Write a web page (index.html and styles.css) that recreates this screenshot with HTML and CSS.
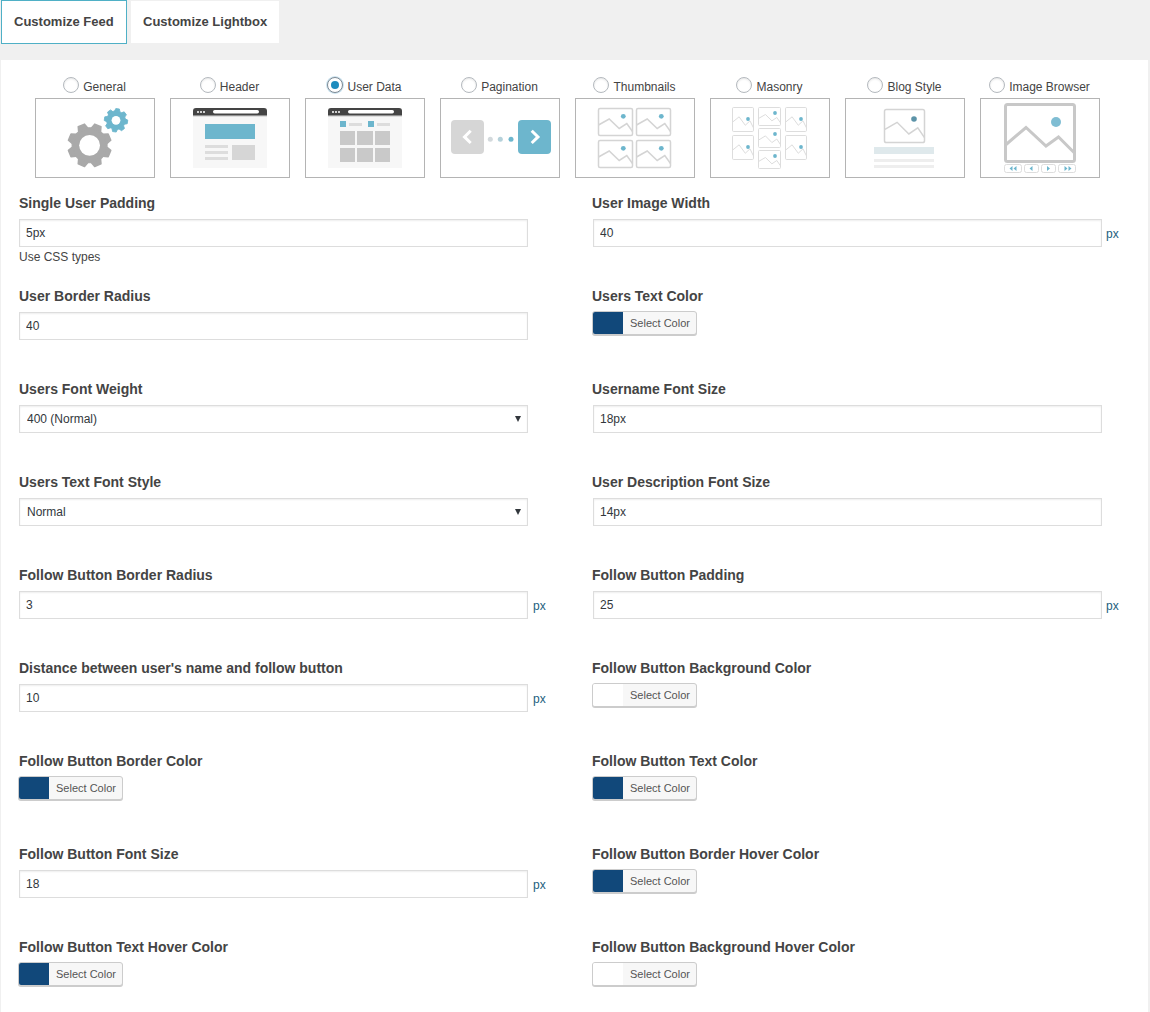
FILE: index.html
```html
<!DOCTYPE html>
<html lang="en">
<head>
<meta charset="utf-8">
<title>Customize Feed</title>
<link rel="stylesheet" href="styles.css">
</head>
<body>
<svg class="defs" aria-hidden="true">
  <symbol id="pic" viewBox="0 0 34 27" preserveAspectRatio="none" overflow="visible">
    <rect x="0" y="0" width="34" height="27" rx="1.5" fill="#fff" vector-effect="non-scaling-stroke"/>
    <polyline points="0,16.5 10.7,10.5 20.7,20 28.3,15 34,23" fill="none" vector-effect="non-scaling-stroke"/>
  </symbol>
  <symbol id="bar" viewBox="0 0 74 13" overflow="visible">
    <path d="M0 8V3a3 3 0 0 1 3-3h68a3 3 0 0 1 3 3v5z" fill="#444"/>
    <rect y="7.5" width="74" height="1.5" fill="#ddd"/>
    <circle cx="5" cy="4" r="1" fill="#fff"/><circle cx="8" cy="4" r="1" fill="#fff"/><circle cx="11" cy="4" r="1" fill="#fff"/>
    <rect x="20" y="2" width="46" height="3.5" rx="1.7" fill="#fff"/>
  </symbol>
  <symbol id="gear" viewBox="-25 -25 50 50" overflow="visible">
    <circle r="17.5"/>
    <g stroke-width="1.5" stroke-linejoin="round">
      <path d="M-5-16.5L-3.4-21.5H3.4L5-16.5z"/>
      <path d="M-5-16.5L-3.4-21.5H3.4L5-16.5z" transform="rotate(45)"/>
      <path d="M-5-16.5L-3.4-21.5H3.4L5-16.5z" transform="rotate(90)"/>
      <path d="M-5-16.5L-3.4-21.5H3.4L5-16.5z" transform="rotate(135)"/>
      <path d="M-5-16.5L-3.4-21.5H3.4L5-16.5z" transform="rotate(180)"/>
      <path d="M-5-16.5L-3.4-21.5H3.4L5-16.5z" transform="rotate(225)"/>
      <path d="M-5-16.5L-3.4-21.5H3.4L5-16.5z" transform="rotate(270)"/>
      <path d="M-5-16.5L-3.4-21.5H3.4L5-16.5z" transform="rotate(315)"/>
    </g>
  </symbol>
</svg>
<nav class="tabs">
  <a class="tab tab-active">Customize Feed</a>
  <a class="tab">Customize Lightbox</a>
</nav>
<main class="panel">
  <div class="kinds">
    <div class="kind">
      <label class="kind-label"><input type="radio" name="kind" class="radio">General</label>
      <div class="kind-box"><svg class="art" viewBox="1 1 118 78">
        <g class="gear-big" transform="translate(54.6 47.3) rotate(22.5) translate(-25 -25)"><use href="#gear" width="50" height="50"/></g>
        <circle cx="54.6" cy="47.3" r="10.4" fill="#fff"/>
        <g class="gear-small" transform="translate(81 22.3) rotate(8) scale(.54) translate(-25 -25)"><use href="#gear" width="50" height="50"/></g>
        <circle cx="81" cy="22.3" r="4.4" fill="#fff"/>
      </svg></div>
    </div>
    <div class="kind">
      <label class="kind-label"><input type="radio" name="kind" class="radio">Header</label>
      <div class="kind-box"><svg class="art" viewBox="1 1 118 78">
        <rect x="23" y="10" width="74" height="60" fill="#f7f7f7"/>
        <use href="#bar" x="23" y="10" width="74" height="13"/>
        <rect x="35" y="26" width="50" height="15" fill="#6db6cd"/>
        <rect x="35" y="47" width="23" height="3" fill="#ddd"/>
        <rect x="35" y="53" width="23" height="3" fill="#ddd"/>
        <rect x="35" y="59" width="23" height="3" fill="#ddd"/>
        <rect x="62" y="47" width="23" height="15" fill="#d6d6d6"/>
      </svg></div>
    </div>
    <div class="kind">
      <label class="kind-label"><input type="radio" name="kind" class="radio" checked>User Data</label>
      <div class="kind-box"><svg class="art" viewBox="1 1 118 78">
        <rect x="23" y="10" width="74" height="60" fill="#f7f7f7"/>
        <use href="#bar" x="23" y="10" width="74" height="13"/>
        <rect x="35" y="23" width="6" height="6" fill="#6db6cd"/>
        <rect x="44" y="25" width="13" height="3" fill="#ddd"/>
        <rect x="63" y="23" width="6" height="6" fill="#6db6cd"/>
        <rect x="72" y="25" width="13" height="3" fill="#ddd"/>
        <g fill="#c9c9c9">
          <rect x="35" y="33" width="15" height="14"/><rect x="52" y="33" width="16" height="14"/><rect x="70" y="33" width="15" height="14"/>
          <rect x="35" y="50" width="15" height="14"/><rect x="52" y="50" width="16" height="14"/><rect x="70" y="50" width="15" height="14"/>
        </g>
      </svg></div>
    </div>
    <div class="kind">
      <label class="kind-label"><input type="radio" name="kind" class="radio">Pagination</label>
      <div class="kind-box"><svg class="art" viewBox="1 1 118 78">
        <rect x="11" y="22" width="33" height="34" rx="4" fill="#d6d6d6"/>
        <polyline points="30.7,32.7 24.5,38.9 30.7,45" fill="none" stroke="#fff" stroke-width="3"/>
        <circle cx="50.3" cy="41.3" r="2.5" fill="#d3d9dc"/>
        <circle cx="60.3" cy="41.3" r="2.5" fill="#b5d1da"/>
        <circle cx="71" cy="41.3" r="2.5" fill="#6db6cd"/>
        <rect x="78" y="22" width="33" height="34" rx="4" fill="#6db6cd"/>
        <polyline points="91.7,32.7 98,38.9 91.7,45" fill="none" stroke="#fff" stroke-width="3"/>
      </svg></div>
    </div>
    <div class="kind">
      <label class="kind-label"><input type="radio" name="kind" class="radio">Thumbnails</label>
      <div class="kind-box"><svg class="art art-thumb" viewBox="1 1 118 78">
        <use href="#pic" x="23.5" y="10.5" width="34" height="27"/>
        <use href="#pic" x="61.5" y="10.5" width="34" height="27"/>
        <use href="#pic" x="23.5" y="42.5" width="34" height="27"/>
        <use href="#pic" x="61.5" y="42.5" width="34" height="27"/>
        <g fill="#6db6cd">
          <circle cx="48.3" cy="18.3" r="2.4"/><circle cx="86.3" cy="18.3" r="2.4"/>
          <circle cx="48.3" cy="50.3" r="2.4"/><circle cx="86.3" cy="50.3" r="2.4"/>
        </g>
      </svg></div>
    </div>
    <div class="kind">
      <label class="kind-label"><input type="radio" name="kind" class="radio">Masonry</label>
      <div class="kind-box"><svg class="art art-mason" viewBox="1 1 118 78">
        <use href="#pic" x="22.5" y="9.5" width="21" height="24"/>
        <use href="#pic" x="22.5" y="37.5" width="21" height="24"/>
        <use href="#pic" x="48.5" y="9.5" width="22" height="18"/>
        <use href="#pic" x="48.5" y="30.5" width="22" height="19"/>
        <use href="#pic" x="48.5" y="52.5" width="22" height="18"/>
        <use href="#pic" x="75.5" y="9.5" width="21" height="24"/>
        <use href="#pic" x="75.5" y="37.5" width="21" height="24"/>
        <g fill="#6db6cd">
          <circle cx="38" cy="21" r="1.9"/><circle cx="38" cy="49" r="1.9"/>
          <circle cx="65" cy="15" r="1.9"/><circle cx="65" cy="36" r="1.9"/><circle cx="65" cy="58" r="1.9"/>
          <circle cx="91" cy="21" r="1.9"/><circle cx="91" cy="49" r="1.9"/>
        </g>
      </svg></div>
    </div>
    <div class="kind">
      <label class="kind-label"><input type="radio" name="kind" class="radio">Blog Style</label>
      <div class="kind-box"><svg class="art art-thumb" viewBox="1 1 118 78">
        <use href="#pic" x="39.5" y="11.5" width="40" height="33"/>
        <circle cx="69" cy="21" r="2.8" fill="#5c93a8"/>
        <rect class="plain" x="29" y="49" width="60" height="7" fill="#dfe9ec"/>
        <rect class="plain" x="29" y="61" width="60" height="3" fill="#eee"/>
        <rect class="plain" x="29" y="67" width="60" height="3" fill="#eee"/>
      </svg></div>
    </div>
    <div class="kind">
      <label class="kind-label"><input type="radio" name="kind" class="radio">Image Browser</label>
      <div class="kind-box"><svg class="art" viewBox="1 1 118 78">
        <rect x="25.5" y="6.5" width="69" height="57" rx="2" fill="#fff" stroke="#c8c8c8" stroke-width="3"/>
        <polyline points="25.5,47 46,29.5 66,48 78.5,39 94.5,55" fill="none" stroke="#c8c8c8" stroke-width="3"/>
        <circle cx="76" cy="24" r="5" fill="#7fbdd3"/>
        <g fill="#fff" stroke="#ddd">
          <rect x="24.5" y="66.5" width="17" height="8" rx="2"/>
          <rect x="44.5" y="66.5" width="14" height="8" rx="2"/>
          <rect x="61.5" y="66.5" width="14" height="8" rx="2"/>
          <rect x="78.5" y="66.5" width="17" height="8" rx="2"/>
        </g>
        <path d="M32.5 68v5l-3-2.500zM36.500 68v5l-3-2.500zM52.500 68v5l-3-2.500zM67 68v5l3-2.500zM84.500 68v5l3-2.500zM88.500 68v5l3-2.500z" fill="#6db6cd"/>
      </svg></div>
    </div>
  </div>

  <div class="form">
    <div class="field">
      <label class="field-label">Single User Padding</label>
      <div class="control"><input class="input" type="text" value="5px"></div>
      <p class="hint">Use CSS types</p>
    </div>
    <div class="field field-right">
      <label class="field-label">User Image Width</label>
      <div class="control"><input class="input" type="text" value="40"><span class="unit">px</span></div>
    </div>

    <div class="field">
      <label class="field-label">User Border Radius</label>
      <div class="control"><input class="input" type="text" value="40"></div>
    </div>
    <div class="field field-right">
      <label class="field-label">Users Text Color</label>
      <button class="color-btn" type="button"><span class="swatch swatch-blue"></span><span class="color-text">Select Color</span></button>
    </div>

    <div class="field">
      <label class="field-label">Users Font Weight</label>
      <div class="control"><div class="select-wrap"><select class="select"><option>400 (Normal)</option></select></div></div>
    </div>
    <div class="field field-right">
      <label class="field-label">Username Font Size</label>
      <div class="control"><input class="input" type="text" value="18px"></div>
    </div>

    <div class="field">
      <label class="field-label">Users Text Font Style</label>
      <div class="control"><div class="select-wrap"><select class="select"><option>Normal</option></select></div></div>
    </div>
    <div class="field field-right">
      <label class="field-label">User Description Font Size</label>
      <div class="control"><input class="input" type="text" value="14px"></div>
    </div>

    <div class="field">
      <label class="field-label">Follow Button Border Radius</label>
      <div class="control"><input class="input" type="text" value="3"><span class="unit">px</span></div>
    </div>
    <div class="field field-right">
      <label class="field-label">Follow Button Padding</label>
      <div class="control"><input class="input" type="text" value="25"><span class="unit">px</span></div>
    </div>

    <div class="field">
      <label class="field-label">Distance between user's name and follow button</label>
      <div class="control"><input class="input" type="text" value="10"><span class="unit">px</span></div>
    </div>
    <div class="field field-right">
      <label class="field-label">Follow Button Background Color</label>
      <button class="color-btn" type="button"><span class="swatch swatch-white"></span><span class="color-text">Select Color</span></button>
    </div>

    <div class="field">
      <label class="field-label">Follow Button Border Color</label>
      <button class="color-btn" type="button"><span class="swatch swatch-blue"></span><span class="color-text">Select Color</span></button>
    </div>
    <div class="field field-right">
      <label class="field-label">Follow Button Text Color</label>
      <button class="color-btn" type="button"><span class="swatch swatch-blue"></span><span class="color-text">Select Color</span></button>
    </div>

    <div class="field">
      <label class="field-label">Follow Button Font Size</label>
      <div class="control"><input class="input" type="text" value="18"><span class="unit">px</span></div>
    </div>
    <div class="field field-right">
      <label class="field-label">Follow Button Border Hover Color</label>
      <button class="color-btn" type="button"><span class="swatch swatch-blue"></span><span class="color-text">Select Color</span></button>
    </div>

    <div class="field">
      <label class="field-label">Follow Button Text Hover Color</label>
      <button class="color-btn" type="button"><span class="swatch swatch-blue"></span><span class="color-text">Select Color</span></button>
    </div>
    <div class="field field-right">
      <label class="field-label">Follow Button Background Hover Color</label>
      <button class="color-btn" type="button"><span class="swatch swatch-white"></span><span class="color-text">Select Color</span></button>
    </div>
  </div>
</main>
</body>
</html>
```
FILE: styles.css
```css
* { box-sizing: border-box; }

html, body { margin: 0; padding: 0; }

body {
  width: 1150px;
  background: #f0f0f0;
  font-family: "Liberation Sans", Arial, sans-serif;
  font-size: 12px;
  color: #444;
}

.defs { position: absolute; width: 0; height: 0; }

.tabs {
  display: flex;
  align-items: flex-start;
  gap: 4px;
  height: 60px;
  padding-left: 1px;
}

.tab {
  display: flex;
  align-items: center;
  height: 42px;
  margin-top: 1px;
  padding: 0 12px 2px;
  background: #fff;
  font-size: 13px;
  font-weight: 700;
  color: #444;
}

.tab-active {
  width: 126px;
  height: 44px;
  margin-top: 0;
  border: 1px solid #4fb0c6;
  padding: 0 0 2px 12px;
}

.panel {
  width: 1147px;
  margin-left: 1px;
  padding: 17px 0 26px 18px;
  background: #fff;
}

.kinds {
  display: flex;
  gap: 15px;
  padding-left: 16px;
}

.kind { width: 120px; }

.kind-label {
  display: flex;
  justify-content: center;
  align-items: flex-start;
  gap: 4px;
  height: 16px;
  margin-bottom: 5px;
  padding-right: 1px;
  line-height: 20px;
  white-space: nowrap;
  color: #444;
}

.radio {
  appearance: none;
  flex: none;
  position: relative;
  width: 16px;
  height: 16px;
  margin: 0;
  border: 1px solid #b4b9be;
  border-radius: 50%;
  background: #fff;
  box-shadow: inset 0 1px 2px rgba(0, 0, 0, .1);
}

.radio:checked {
  border-color: #7e8993;
  box-shadow: 0 0 0 1px #cde4f0;
}

.radio:checked::before {
  content: "";
  position: absolute;
  left: 3px;
  top: 3px;
  width: 8px;
  height: 8px;
  border-radius: 50%;
  background: #1e8cbe;
}

.kind-box {
  width: 120px;
  height: 80px;
  border: 1px solid #b4b4b4;
}

.art {
  display: block;
  width: 118px;
  height: 78px;
}

.gear-big { fill: #a9a9a9; stroke: #a9a9a9; }
.gear-small { fill: #6db6cd; stroke: #6db6cd; }

.art-thumb { stroke: #d4d4d4; stroke-width: 1.5px; }
.art-mason { stroke: #ddd; stroke-width: 1px; }
.art-thumb circle, .art-mason circle, .plain { stroke: none; }

.form {
  display: grid;
  grid-template-columns: 573px 1fr;
  grid-template-rows: repeat(8, 93px) auto;
  margin-top: 16px;
}

.field { min-width: 0; }

.field-label {
  display: block;
  height: 18px;
  margin-bottom: 7px;
  font-size: 14px;
  line-height: 18px;
  font-weight: 700;
  color: #444;
}

.control {
  display: flex;
  align-items: center;
  gap: 5px;
}

.field-right .control { gap: 4px; }

.input, .select {
  width: 509px;
  height: 28px;
  margin: 0;
  padding: 0 7px;
  border: 1px solid #ddd;
  border-radius: 0;
  background: #fff;
  box-shadow: inset 0 1px 2px rgba(0, 0, 0, .07);
  font-family: inherit;
  font-size: 12px;
  color: #32373c;
  outline: none;
}

.input { padding: 0 6px; }

.field-right .input { margin-left: 1px; }

.select { display: block; appearance: none; }

.select-wrap { position: relative; width: 509px; }

.select-wrap::after {
  content: "";
  position: absolute;
  right: 7px;
  top: 11px;
  border-style: solid;
  border-width: 6px 3px 0;
  border-color: #32373c transparent transparent;
}

.unit { padding-top: 2px; color: #1d5f80; font-size: 12px; }

.hint {
  margin: 3px 0 0;
  font-size: 12px;
  line-height: 14px;
  color: #444;
}

.color-btn {
  display: flex;
  align-items: stretch;
  width: 105px;
  height: 24px;
  margin: -1px 0 0 -1px;
  padding: 0;
  border: 1px solid #ccc;
  border-radius: 3px;
  background: #f7f7f7;
  box-shadow: 0 1px 0 #ccc;
  font-family: inherit;
  overflow: hidden;
}

.field-right .color-btn { margin-left: 0; }

.swatch { width: 30px; flex: none; }
.swatch-blue { background: #11487a; }
.swatch-white { background: #fff; }

.color-text {
  flex: 1;
  align-self: center;
  padding-left: 1px;
  font-size: 11px;
  line-height: 20px;
  color: #555;
  text-align: center;
}
```
